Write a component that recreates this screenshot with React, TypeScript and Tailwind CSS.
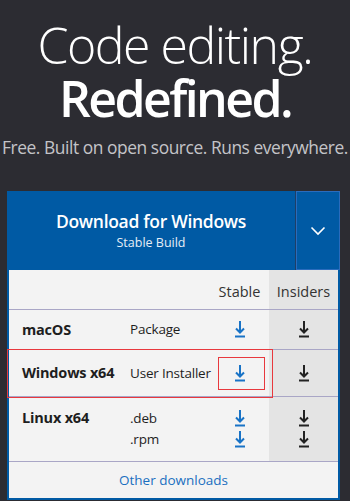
import React from "react";

function DownIcon({ color }: { color: string }) {
  return (
    <svg width="10" height="17" viewBox="0 0 10 17" fill="none" className="block">
      <path d="M5 0 V12" stroke={color} strokeWidth="2" />
      <path d="M1 7.5 L5 11.5 L9 7.5" stroke={color} strokeWidth="2" />
      <path d="M0 15.5 H10" stroke={color} strokeWidth="2" />
    </svg>
  );
}

const blue = "#1873c6";
const dark = "#222222";

const rows = [
  { os: "macOS", types: ["Package"], h: "h-[40px]" },
  { os: "Windows x64", types: ["User Installer"], h: "h-[47px]" },
  { os: "Linux x64", types: [".deb", ".rpm"], h: "h-[65px]" },
];

export default function App() {
  return (
    <div
      className="relative w-[350px] h-[501px] overflow-hidden bg-[#2c2c32] text-white"
      style={{ fontFamily: '"Open Sans", "Noto Sans", sans-serif' }}
    >
      <h1 className="pt-[19px] text-center text-[50px] leading-[53px]">
        <span className="block font-light tracking-[-1.5px]">Code editing.</span>
        <span className="block font-semibold tracking-[-2.6px]">Redefined.</span>
      </h1>
      <p className="mt-[11px] text-center text-[17.4px] leading-[22px] tracking-[-0.45px] text-[#c4c4c8] whitespace-nowrap">
        Free. Built on open source. Runs everywhere.
      </p>

      <div className="mt-[33px] ml-[7px] w-[333px]">
        <div className="flex h-[79px] bg-[#005aa4]">
          <div className="flex flex-1 flex-col items-center justify-center border-r border-[#1e3f66]">
            <span className="text-[17.5px] font-semibold leading-[24px] tracking-[-0.3px]">
              Download for Windows
            </span>
            <span className="text-[12.5px] leading-[20px] text-[#e6eef7]">Stable Build</span>
          </div>
          <div className="flex w-[44px] items-center justify-center border border-[#2a6cbd]">
            <svg width="16" height="10" viewBox="0 0 16 10" fill="none">
              <path d="M1.5 1.5 L8 8 L14.5 1.5" stroke="white" strokeWidth="1.6" />
            </svg>
          </div>
        </div>

        <div className="border-x-2 border-b-2 border-[#005aa4] bg-[#f3f3f3] text-[#1e1e1e]">
          <div className="grid grid-cols-[121px_80px_59px_1fr] h-[39px] text-[14.5px] text-[#333]">
            <div />
            <div />
            <div className="flex items-end justify-center pb-[6px]">Stable</div>
            <div className="flex items-end justify-center bg-[#e4e4e4] pb-[6px]">Insiders</div>
          </div>
          {rows.map((r, i) => (
            <div
              key={r.os}
              className={`grid grid-cols-[121px_80px_59px_1fr] border-t border-[#a9a6c6] ${r.h}`}
            >
              <div className={`pl-[13px] text-[14.5px] font-bold tracking-[-0.2px] ${i === 2 ? "pt-[10px]" : "flex items-center"}`}>
                {r.os}
              </div>
              <div className={`text-[13.5px] tracking-[-0.2px] whitespace-nowrap ${i === 2 ? "pt-[11px] leading-[21px]" : "flex items-center"}`}>
                {r.types.map((t) => (
                  <div key={t}>{t}</div>
                ))}
              </div>
              <div className={`flex flex-col items-center gap-[4px] ${i === 2 ? "pt-[13px]" : "justify-center"}`}>
                {r.types.map((t) => (
                  <DownIcon key={t} color={blue} />
                ))}
              </div>
              <div className={`flex flex-col items-center gap-[4px] bg-[#e4e4e4] ${i === 2 ? "pt-[13px]" : "justify-center"}`}>
                {r.types.map((t) => (
                  <DownIcon key={t} color={dark} />
                ))}
              </div>
            </div>
          ))}
          <div className="flex h-[37px] items-center justify-center border-t border-[#a9a6c6] text-[13.5px] text-[#1a6fc0]">
            Other downloads
          </div>
        </div>
      </div>

      <div className="pointer-events-none absolute left-[7px] top-[349px] h-[49px] w-[266px] border border-[#e8383d]" />
      <div className="pointer-events-none absolute left-[218px] top-[357px] h-[33px] w-[47px] border border-[#e8383d]" />
    </div>
  );
}
